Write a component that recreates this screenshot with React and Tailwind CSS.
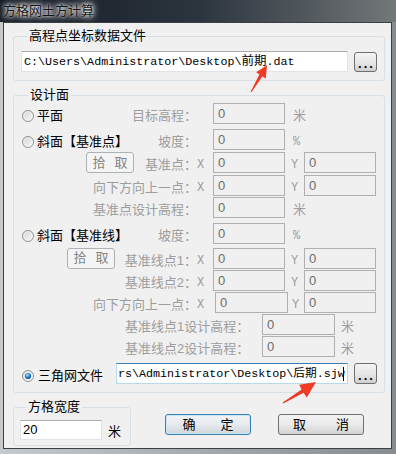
import React from "react";

const UI = "font-['Liberation_Sans','Noto_Sans_CJK_SC',sans-serif]";
const MONO = "font-['Liberation_Mono','Noto_Sans_CJK_SC',monospace]";
const G = "text-[#9d9d9d]";

function Radio({ on, id }) {
  return (
    <svg width="12" height="12" viewBox="0 0 12 12" className="shrink-0">
      <defs>
        <linearGradient id={id + "a"} x1="0" y1="0" x2="1" y2="1">
          <stop offset="0" stopColor="#cfcfcf" />
          <stop offset="1" stopColor="#fbfbfb" />
        </linearGradient>
        <radialGradient id={id + "b"} cx="0.4" cy="0.35" r="0.7">
          <stop offset="0" stopColor="#c6e7fa" />
          <stop offset="0.45" stopColor="#3590d8" />
          <stop offset="1" stopColor="#0c4a86" />
        </radialGradient>
      </defs>
      <circle cx="6" cy="6" r="5.5" fill={`url(#${id}a)`} stroke="#8e8f8f" />
      <circle cx="6" cy="6" r="4.2" fill="none" stroke="#f6f6f6" strokeWidth="0.8" />
      {on && <circle cx="6" cy="6" r="3.1" fill={`url(#${id}b)`} />}
    </svg>
  );
}

function Dis({ className }) {
  return (
    <div className={`h-[21px] shrink-0 border border-[#b0b0b0] bg-[#f0f0f0] flex items-center pl-[4px] text-[13px] text-[#6d6d6d] ${className}`}>
      0
    </div>
  );
}

function Row({ className, children }) {
  return <div className={`flex h-[21px] items-center ${className}`}>{children}</div>;
}

function Lbl({ className, children }) {
  return <span className={`pt-[4px] leading-[16px] whitespace-nowrap ${className}`}>{children}</span>;
}

function Dots({ h }) {
  return (
    <div className={`w-[23px] ${h} shrink-0 border border-[#707070] rounded-[3px] bg-linear-to-b from-[#f3f3f3] via-[#e8e8e8] to-[#cfcfcf] flex items-end justify-center pb-[2px] text-[13px] font-bold leading-[10px] tracking-[2px] pl-[2px] text-black`}>
      ...
    </div>
  );
}

function Pick({ className }) {
  return (
    <div className={`h-[21px] w-[48px] shrink-0 border border-[#adb2b5] rounded-[3px] bg-[#f4f4f4] flex items-center justify-center gap-[9px] text-[#838383] ${className}`}>
      <span>拾</span>
      <span>取</span>
    </div>
  );
}

export default function App() {
  return (
    <div className={`relative w-[396px] h-[454px] overflow-hidden bg-linear-to-r from-[#c6cacd] to-[#868c90] flex flex-col ${UI} text-[13px] leading-[16px] text-black`}>
      {/* title bar */}
      <div className="h-[22px] shrink-0 bg-linear-to-r from-[#141b25] via-[#2c343d] to-[#737879] flex items-center pl-[3px]">
        <span className="text-[13px] text-[#161616] [text-shadow:0_0_6px_#ffffff,0_0_10px_#ffffff,0_0_3px_#ffffff]">方格网土方计算</span>
      </div>

      {/* client */}
      <div className="flex-1 ml-[3px] mr-[4px] mb-[5px] border border-[#3a4046] bg-[#f0f0f0] pl-[9px] pt-[5px]">
        <fieldset className="w-[372px] border border-[#d5dfe5] rounded-[3px] pl-[7px] pr-[7px] pt-[7px] pb-[8px]">
          <legend className="ml-[6px] px-[2px]">高程点坐标数据文件</legend>
          <div className="flex items-center gap-[6px]">
            <div className={`w-[327px] h-[21px] border border-[#e2e3ea] border-t-[#abadb3] bg-white flex items-center pl-[2px] ${MONO} text-[11.7px] whitespace-nowrap overflow-hidden`}>
              C:\Users\Administrator\Desktop\<span className="text-[12.5px]">前期</span>.dat
            </div>
            <Dots h="h-[20px]" />
          </div>
        </fieldset>

        <fieldset className="mt-[6px] w-[372px] border border-[#d5dfe5] rounded-[3px] pl-[8px] pb-[8px]">
          <legend className="ml-[6px] px-[2px]">设计面</legend>

          {/* 平面 */}
          <Row>
            <div className="w-[175px] flex items-center self-stretch">
              <span className="pt-[5px]"><Radio id="r1" /></span>
              <Lbl className="ml-[3px]">平面</Lbl>
              <Lbl className={`ml-auto ${G}`}>目标高程：</Lbl>
            </div>
            <div className="w-[16px]" />
            <Dis className="w-[72px]" />
            <Lbl className={`pl-[8px] ${G}`}>米</Lbl>
          </Row>

          {/* 斜面 基准点 */}
          <Row className="mt-[5px]">
            <div className="w-[175px] flex items-center self-stretch">
              <span className="pt-[5px]"><Radio id="r2" /></span>
              <Lbl className="ml-[3px]">斜面【基准点】</Lbl>
              <Lbl className={`ml-auto ${G}`}>坡度：</Lbl>
            </div>
            <div className="w-[16px]" />
            <Dis className="w-[72px]" />
            <Lbl className={`pl-[8px] ${G} ${MONO} text-[12px]`}>%</Lbl>
          </Row>
          <Row className="mt-[2px]">
            <div className="w-[175px] flex items-center self-stretch">
              <Pick className="ml-[64px]" />
              <Lbl className={`ml-auto ${G}`}>基准点：</Lbl>
            </div>
            <Lbl className={`w-[16px] ${G} ${MONO} text-[12px]`}>X</Lbl>
            <Dis className="w-[72px]" />
            <Lbl className={`w-[19px] pl-[6px] ${G} ${MONO} text-[12px]`}>Y</Lbl>
            <Dis className="w-[72px]" />
          </Row>
          <Row className="mt-[2px]">
            <div className="w-[175px] flex justify-end">
              <Lbl className={G}>向下方向上一点：</Lbl>
            </div>
            <Lbl className={`w-[16px] ${G} ${MONO} text-[12px]`}>X</Lbl>
            <Dis className="w-[72px]" />
            <Lbl className={`w-[19px] pl-[6px] ${G} ${MONO} text-[12px]`}>Y</Lbl>
            <Dis className="w-[72px]" />
          </Row>
          <Row className="mt-[1px]">
            <div className="w-[175px] flex justify-end">
              <Lbl className={G}>基准点设计高程：</Lbl>
            </div>
            <div className="w-[16px]" />
            <Dis className="w-[72px]" />
            <Lbl className={`pl-[8px] ${G}`}>米</Lbl>
          </Row>

          {/* 斜面 基准线 */}
          <Row className="mt-[5px]">
            <div className="w-[175px] flex items-center self-stretch">
              <span className="pt-[5px]"><Radio id="r3" /></span>
              <Lbl className="ml-[3px]">斜面【基准线】</Lbl>
              <Lbl className={`ml-auto ${G}`}>坡度：</Lbl>
            </div>
            <div className="w-[16px]" />
            <Dis className="w-[72px]" />
            <Lbl className={`pl-[8px] ${G} ${MONO} text-[12px]`}>%</Lbl>
          </Row>
          <Row className="mt-[4px]">
            <div className="w-[175px] flex items-center self-stretch">
              <Pick className="ml-[45px] -mt-[1px]" />
              <Lbl className={`ml-auto ${G}`}>基准线点1：</Lbl>
            </div>
            <Lbl className={`w-[16px] ${G} ${MONO} text-[12px]`}>X</Lbl>
            <Dis className="w-[72px]" />
            <Lbl className={`w-[19px] pl-[6px] ${G} ${MONO} text-[12px]`}>Y</Lbl>
            <Dis className="w-[72px]" />
          </Row>
          <Row className="mt-[1px]">
            <div className="w-[175px] flex justify-end">
              <Lbl className={G}>基准线点2：</Lbl>
            </div>
            <Lbl className={`w-[16px] ${G} ${MONO} text-[12px]`}>X</Lbl>
            <Dis className="w-[72px]" />
            <Lbl className={`w-[19px] pl-[6px] ${G} ${MONO} text-[12px]`}>Y</Lbl>
            <Dis className="w-[72px]" />
          </Row>
          <Row className="mt-[1px]">
            <div className="w-[175px] flex justify-end">
              <Lbl className={G}>向下方向上一点：</Lbl>
            </div>
            <Lbl className={`w-[18px] ${G} ${MONO} text-[12px]`}>X</Lbl>
            <Dis className="w-[73px]" />
            <Lbl className={`w-[16px] pl-[4px] ${G} ${MONO} text-[12px]`}>Y</Lbl>
            <Dis className="w-[72px]" />
          </Row>
          <Row className="mt-[1px]">
            <div className="w-[240px] flex">
              <Lbl className={`ml-[103px] ${G}`}>基准线点1设计高程：</Lbl>
            </div>
            <Dis className="w-[73px]" />
            <Lbl className={`pl-[6px] ${G}`}>米</Lbl>
          </Row>
          <Row className="mt-[1px]">
            <div className="w-[240px] flex">
              <Lbl className={`ml-[103px] ${G}`}>基准线点2设计高程：</Lbl>
            </div>
            <Dis className="w-[73px]" />
            <Lbl className={`pl-[6px] ${G}`}>米</Lbl>
          </Row>

          {/* 三角网文件 */}
          <Row className="mt-[6px]">
            <div className="w-[94px] flex items-center self-stretch">
              <span className="pt-[5px]"><Radio id="r4" on /></span>
              <Lbl className="ml-[4px]">三角网文件</Lbl>
            </div>
            <div className={`relative w-[232px] h-[21px] border border-[#b7d9ed] border-t-[#3d7bad] bg-white flex items-center pl-[1px] ${MONO} text-[11.7px] whitespace-nowrap overflow-hidden`}>
              rs\Administrator\Desktop\<span className="text-[11.7px]">后期</span>.sjw
              <span className="inline-block w-[1px] h-[14px] bg-black ml-[-2px]" />
            </div>
            <div className="ml-[6px]">
              <Dots h="h-[21px]" />
            </div>
          </Row>
        </fieldset>

        <div className="flex items-start">
          <fieldset className="mt-[6px] w-[118px] border border-[#d5dfe5] rounded-[3px] pl-[6px] pt-[5px] pb-[5px]">
            <legend className="ml-[6px] px-[2px]">方格宽度</legend>
            <div className="flex items-center">
              <div className="w-[82px] h-[20px] border border-[#e2e3ea] border-t-[#abadb3] bg-white flex items-center pl-[2px]">20</div>
              <Lbl className="ml-[6px] pt-[2px]">米</Lbl>
            </div>
          </fieldset>
          <div className="mt-[21px] ml-[34px] w-[86px] h-[21px] border border-[#3c7fb1] rounded-[3px] bg-linear-to-b from-[#f0f3f6] via-[#e6eaee] to-[#cfd5da] [box-shadow:inset_0_0_0_1px_#c8e8fb] flex items-center justify-center gap-[25px]">
            <span>确</span>
            <span>定</span>
          </div>
          <div className="mt-[21px] ml-[27px] w-[86px] h-[21px] border border-[#707070] rounded-[3px] bg-linear-to-b from-[#f2f2f2] via-[#ebebeb] to-[#d3d3d3] flex items-center justify-center gap-[30px]">
            <span>取</span>
            <span>消</span>
          </div>
        </div>
      </div>

      {/* red annotation arrows */}
      <svg className="absolute inset-0 pointer-events-none" width="396" height="454" viewBox="0 0 396 454">
        <polygon
          fill="#ef3a26"
          points="251.4,92.3 262.4,76.4 265.8,78.6 267,65 256.2,72.2 259.4,74.4 250.6,91.7"
        />
        <polygon
          fill="#ef3a26"
          points="283.3,403.5 303.6,392.8 306.8,397.6 316,382 299.2,384.8 301.6,389.6 282.7,402.5"
        />
      </svg>
    </div>
  );
}
